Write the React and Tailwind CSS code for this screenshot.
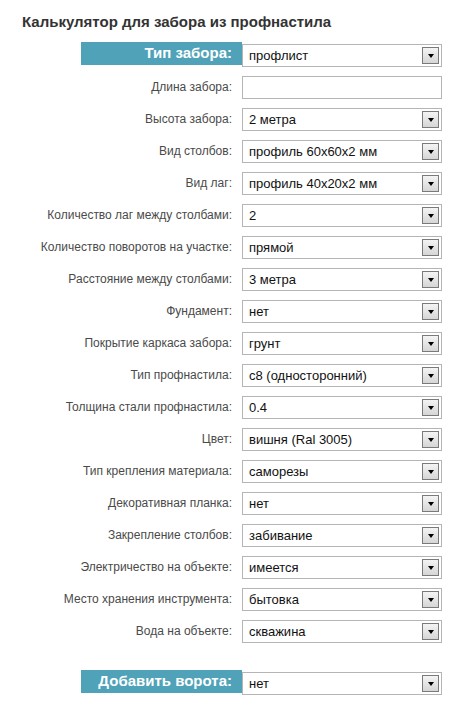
const rows = [
  ["Тип забора:", "профлист", true],
  ["Длина забора:", null],
  ["Высота забора:", "2 метра"],
  ["Вид столбов:", "профиль 60х60х2 мм"],
  ["Вид лаг:", "профиль 40х20х2 мм"],
  ["Количество лаг между столбами:", "2"],
  ["Количество поворотов на участке:", "прямой"],
  ["Расстояние между столбами:", "3 метра"],
  ["Фундамент:", "нет"],
  ["Покрытие каркаса забора:", "грунт"],
  ["Тип профнастила:", "с8 (односторонний)"],
  ["Толщина стали профнастила:", "0.4"],
  ["Цвет:", "вишня (Ral 3005)"],
  ["Тип крепления материала:", "саморезы"],
  ["Декоративная планка:", "нет"],
  ["Закрепление столбов:", "забивание"],
  ["Электричество на объекте:", "имеется"],
  ["Место хранения инструмента:", "бытовка"],
  ["Вода на объекте:", "скважина"]
];

function Field({ value }) {
  return (
    <div className="flex h-[23px] w-[200px] items-center justify-between border border-[#b5b5b5] bg-white pl-[6px] pr-[2px]">
      <span className="text-[13px] text-[#111]">{value}</span>
      {value !== null && (
        <span className="flex h-[17px] w-[17px] items-center justify-center border border-[#7a7a7a] bg-gradient-to-b from-[#f4f4f4] to-[#d6d6d6]">
          <span className="h-0 w-0 border-x-[3.5px] border-t-[4px] border-x-transparent border-t-black" />
        </span>
      )}
    </div>
  );
}

function Row({ label, value, accent }) {
  return (
    <div className="flex h-[32px] items-center">
      {accent ? (
        <div className="ml-[81px] -mt-[4px] flex h-[23px] w-[161px] items-center justify-end bg-[#4fa2b8] pr-[10px] text-[15px] font-bold text-white">{label}</div>
      ) : (
        <div className="-mt-[2px] w-[242px] pr-[10px] text-right text-[12px] text-[#4a4a4a]">{label}</div>
      )}
      <Field value={value} />
    </div>
  );
}

export default function App() {
  return (
    <div className="h-[707px] w-[460px] bg-white font-['Liberation_Sans',Arial,sans-serif]">
      <h1 className="pl-[22px] pt-[11px] text-[15px] font-bold text-[#333]">Калькулятор для забора из профнастила</h1>
      <div className="mt-[6px]">
        {rows.map(([label, value, accent]) => (
          <Row key={label} label={label} value={value} accent={accent} />
        ))}
        <div className="mt-[20px]">
          <Row label="Добавить ворота:" value="нет" accent />
        </div>
      </div>
    </div>
  );
}
